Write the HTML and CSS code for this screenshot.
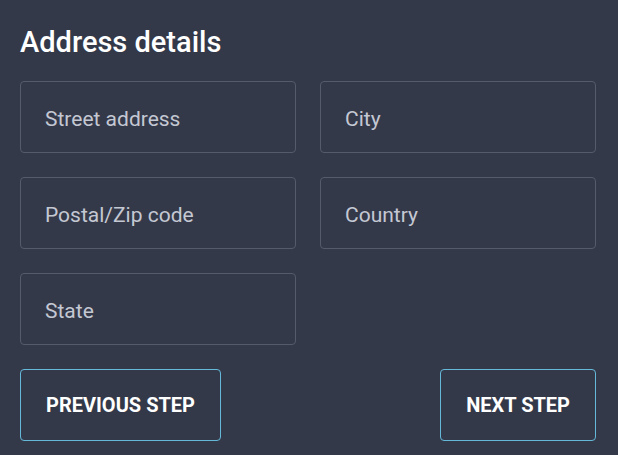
FILE: index.html
```html
<!DOCTYPE html>
<html lang="en">
<head>
<meta charset="UTF-8">
<meta name="viewport" content="width=device-width, initial-scale=1.0">
<title>Address details</title>
<link rel="stylesheet" href="styles.css">
</head>
<body>

<div class="container">
  <h2>Address details</h2>
  <div class="fields">
    <input type="text" placeholder="Street address">
    <input type="text" placeholder="City">
    <input type="text" placeholder="Postal/Zip code">
    <input type="text" placeholder="Country">
    <input type="text" placeholder="State">
  </div>
  <div class="actions">
    <button>Previous step</button>
    <button>Next step</button>
  </div>
</div>

</body>
</html>
```

FILE: styles.css
```css
html, body {
  background-color: #343949;
}
body {
  font-family: Roboto, "Liberation Sans", sans-serif;
  margin: 0;
  padding: 0 20px;
}
.container {
  width: 576px;
}
h2 {
  color: #ffffff;
  font-size: 29px;
  font-weight: 500;
  margin: 0;
  padding-top: 25px;
  height: 81px;
  box-sizing: border-box;
}
.fields {
  display: grid;
  grid-template-columns: 1fr 1fr;
  gap: 24px;
}
input[type="text"] {
  width: 100%;
  min-width: 0;
  height: 72px;
  box-sizing: border-box;
  padding: 4px 24px 0;
  background-color: transparent;
  border: 1px solid #555b6b;
  border-radius: 4px;
  font-family: inherit;
  font-size: 21px;
  color: #ffffff;
  outline: none;
}
input::placeholder {
  color: #c4c8d3;
}
.actions {
  display: flex;
  justify-content: space-between;
  margin-top: 24px;
}
button {
  height: 72px;
  padding: 0 25px;
  background-color: transparent;
  color: #ffffff;
  border: 1px solid #66b8d9;
  border-radius: 4px;
  font-family: inherit;
  font-size: 20px;
  font-weight: 700;
  text-transform: uppercase;
  cursor: pointer;
}
```
